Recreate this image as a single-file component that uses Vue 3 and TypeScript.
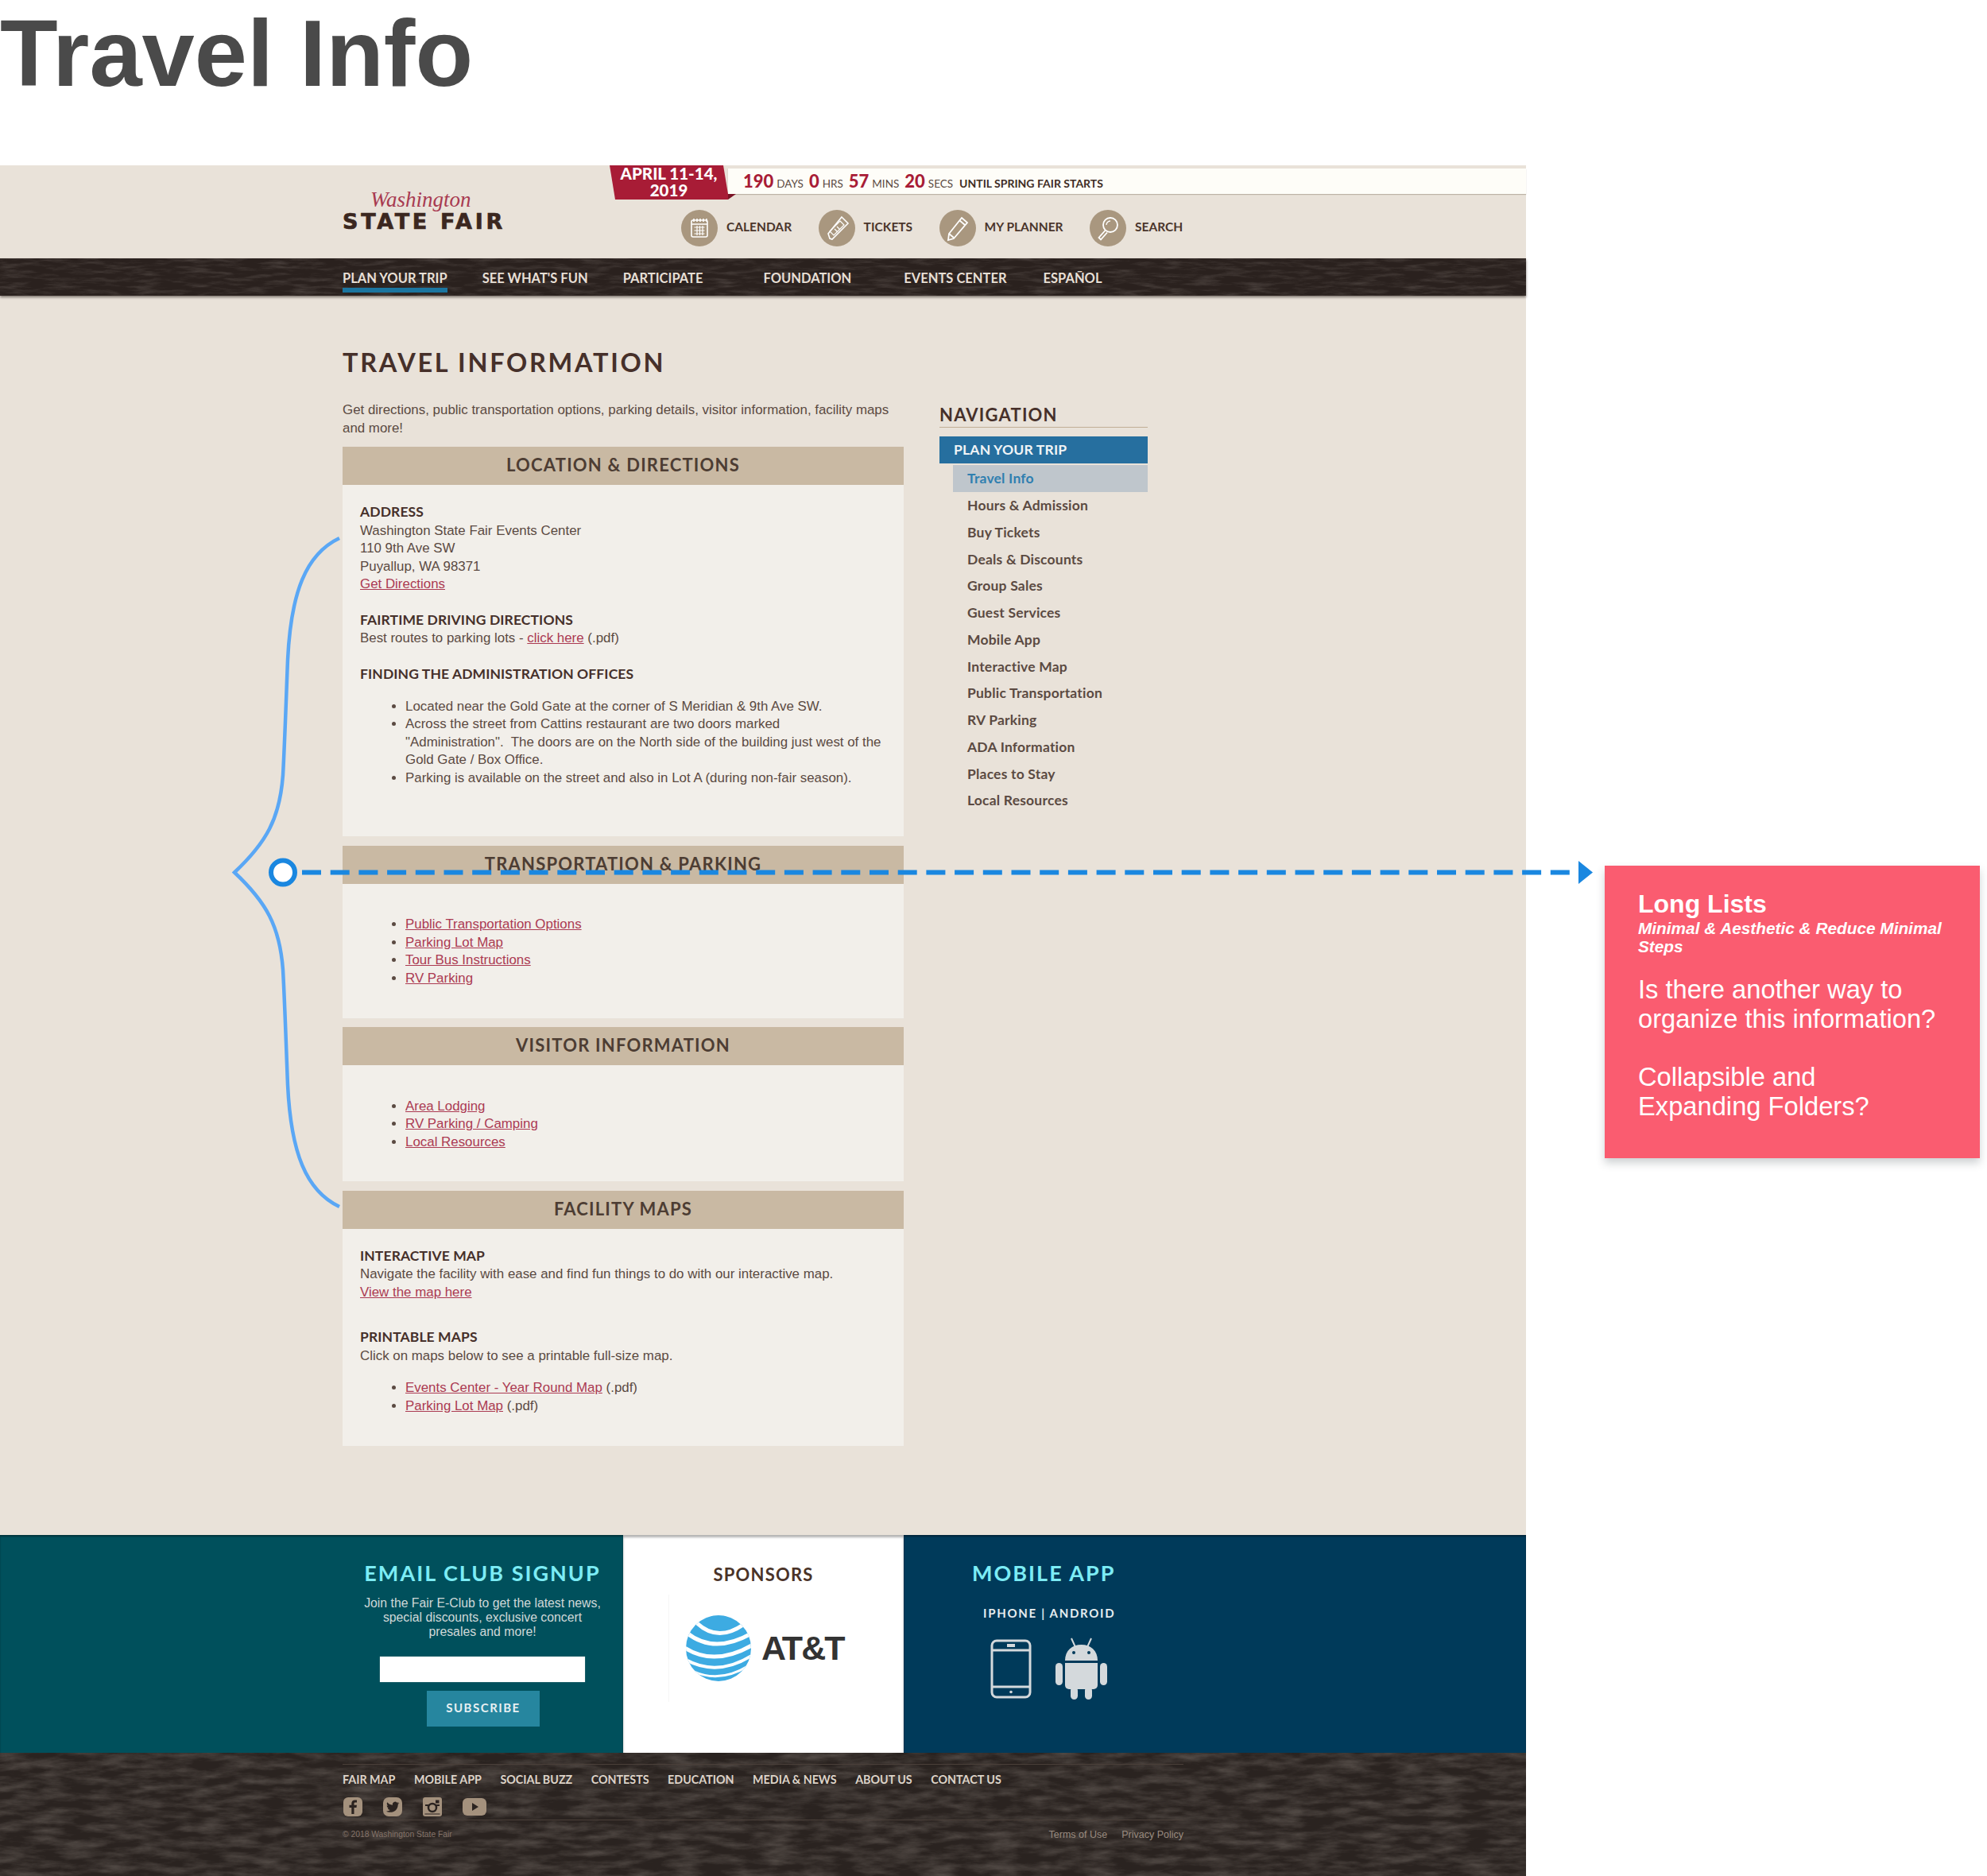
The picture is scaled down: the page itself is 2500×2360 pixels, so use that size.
<script setup lang="ts">
const tools = ['CALENDAR', 'TICKETS', 'MY PLANNER', 'SEARCH']
const navItems = ['PLAN YOUR TRIP', "SEE WHAT'S FUN", 'PARTICIPATE', 'FOUNDATION', 'EVENTS CENTER', 'ESPAÑOL']
const sideItems = [
  'Hours & Admission', 'Buy Tickets', 'Deals & Discounts', 'Group Sales', 'Guest Services', 'Mobile App',
  'Interactive Map', 'Public Transportation', 'RV Parking', 'ADA Information', 'Places to Stay', 'Local Resources'
]
const transportLinks = ['Public Transportation Options', 'Parking Lot Map', 'Tour Bus Instructions', 'RV Parking']
const visitorLinks = ['Area Lodging', 'RV Parking / Camping', 'Local Resources']
const footerLinks = ['FAIR MAP', 'MOBILE APP', 'SOCIAL BUZZ', 'CONTESTS', 'EDUCATION', 'MEDIA & NEWS', 'ABOUT US', 'CONTACT US']
</script>

<template>
  <div class="page">
    <h1 class="page-title">Travel Info</h1>

    <div class="site">
      <header class="head">
        <div class="logo">
          <span class="logo-script">Washington</span>
          <span class="logo-main">STATE FAIR</span>
        </div>
        <div class="head-right">
          <div class="count-row">
            <div class="ribbon">APRIL 11-14,<br />2019</div>
            <div class="ribbon-fold"></div>
            <div class="countdown">
              <b>190</b><span>DAYS</span><b>0</b><span>HRS</span><b>57</b><span>MINS</span><b>20</b><span>SECS</span>
              <em>UNTIL SPRING FAIR STARTS</em>
            </div>
          </div>
          <div class="tools">
            <div v-for="(tool, i) in tools" :key="tool" class="tool">
              <span class="tool-icon">
                <svg v-if="i === 0" viewBox="0 0 46 46" width="46" height="46" fill="none" stroke="#fff" stroke-width="1.6">
                  <rect x="13" y="13" width="20" height="21" rx="2" />
                  <path d="M13 18h20M16 11v4M20 11v4M24 11v4M28 11v4M32 11v4" />
                  <path d="M16.500 22h13M16.500 26h13M16.500 30h13M20 20v12M23.500 20v12M27 20v12" stroke-width="1.200" />
                </svg>
                <svg v-else-if="i === 1" viewBox="0 0 46 46" width="46" height="46" fill="none" stroke="#fff" stroke-width="1.6">
                  <path d="M29 9l8 8-3 3-17 17-3-1-1-3-1-3z" />
                  <path d="M27 14l5 5-13 13-5-5z" stroke-width="1.200" />
                  <path d="M20 24l4 4M23 21l4 4" stroke-width="1.200" />
                </svg>
                <svg v-else-if="i === 2" viewBox="0 0 46 46" width="46" height="46" fill="none" stroke="#fff" stroke-width="1.8">
                  <path d="M28 10l7 6-17 20-7 2 1-8z" />
                  <path d="M25 13l7 6M12 30l6 5" />
                </svg>
                <svg v-else viewBox="0 0 46 46" width="46" height="46" fill="none" stroke="#fff" stroke-width="1.8">
                  <circle cx="26" cy="19" r="9" />
                  <path d="M26 14a5 5 0 0 0-5 5" stroke-width="1.300" />
                  <path d="M19.500 26l-8 9 2.500 2.500 8-9" />
                </svg>
              </span>
              <span class="tool-label">{{ tool }}</span>
            </div>
          </div>
        </div>
      </header>

      <nav class="mainnav">
        <svg class="wood" width="100%" height="100%">
          <filter id="grainNav" x="0" y="0" width="100%" height="100%">
            <feTurbulence type="fractalNoise" baseFrequency="0.03 0.2" numOctaves="5" seed="7" />
            <feColorMatrix values="0 0 0 0 0.40  0 0 0 0 0.35  0 0 0 0 0.32  0.500 0 0 0 -0.220" />
          </filter>
          <rect width="100%" height="100%" filter="url(#grainNav)" />
        </svg>
        <a v-for="(item, i) in navItems" :key="item" class="nav-link" :class="{ current: i === 0 }">{{ item }}</a>
      </nav>

      <main class="main">
        <div class="content">
          <h2 class="main-title">TRAVEL INFORMATION</h2>
          <p class="intro">Get directions, public transportation options, parking details, visitor information, facility maps and more!</p>

          <section class="card">
            <h3 class="card-head">LOCATION &amp; DIRECTIONS</h3>
            <div class="card-body location">
              <h4>ADDRESS</h4>
              <p>Washington State Fair Events Center<br />110 9th Ave SW<br />Puyallup, WA 98371<br /><a>Get Directions</a></p>
              <h4 class="spaced">FAIRTIME DRIVING DIRECTIONS</h4>
              <p>Best routes to parking lots - <a>click here</a> (.pdf)</p>
              <h4 class="spaced">FINDING THE ADMINISTRATION OFFICES</h4>
              <ul class="offices">
                <li>Located near the Gold Gate at the corner of S Meridian &amp; 9th Ave SW.</li>
                <li>Across the street from Cattins restaurant are two doors marked<br />"Administration".&nbsp; The doors are on the North side of the building just west of the<br />Gold Gate / Box Office.</li>
                <li>Parking is available on the street and also in Lot A (during non-fair season).</li>
              </ul>
            </div>
          </section>

          <section class="card">
            <h3 class="card-head">TRANSPORTATION &amp; PARKING</h3>
            <div class="card-body links">
              <ul>
                <li v-for="link in transportLinks" :key="link"><a>{{ link }}</a></li>
              </ul>
            </div>
          </section>

          <section class="card">
            <h3 class="card-head">VISITOR INFORMATION</h3>
            <div class="card-body links short">
              <ul>
                <li v-for="link in visitorLinks" :key="link"><a>{{ link }}</a></li>
              </ul>
            </div>
          </section>

          <section class="card">
            <h3 class="card-head">FACILITY MAPS</h3>
            <div class="card-body maps">
              <h4>INTERACTIVE MAP</h4>
              <p>Navigate the facility with ease and find fun things to do with our interactive map.<br /><a>View the map here</a></p>
              <h4 class="printable">PRINTABLE MAPS</h4>
              <p>Click on maps below to see a printable full-size map.</p>
              <ul class="map-list">
                <li><a>Events Center - Year Round Map</a> (.pdf)</li>
                <li><a>Parking Lot Map</a> (.pdf)</li>
              </ul>
            </div>
          </section>
        </div>

        <aside class="side">
          <h3 class="side-title">NAVIGATION</h3>
          <div class="side-top">PLAN YOUR TRIP</div>
          <div class="side-current">Travel Info</div>
          <a v-for="item in sideItems" :key="item" class="side-link">{{ item }}</a>
        </aside>
      </main>

      <div class="bands">
        <div class="band band-email">
          <h3 class="band-title">EMAIL CLUB SIGNUP</h3>
          <p class="band-copy">Join the Fair E-Club to get the latest news,<br />special discounts, exclusive concert<br />presales and more!</p>
          <input class="email" type="text" />
          <button class="subscribe" type="button">SUBSCRIBE</button>
        </div>
        <div class="band band-sponsor">
          <h3 class="sponsor-title">SPONSORS</h3>
          <div class="sponsor-logo">
            <svg viewBox="0 0 82 83" width="82" height="83">
              <clipPath id="globeClip"><ellipse cx="41" cy="41.500" rx="41" ry="41.500" /></clipPath>
              <g clip-path="url(#globeClip)">
                <rect width="82" height="83" fill="#3dabe2" />
                <g fill="none" stroke="#fff">
                  <path d="M14 10Q40 34 72 12" stroke-width="5" />
                  <path d="M1 22Q36 50 84 22" stroke-width="5" />
                  <path d="M-3 40Q36 66 86 36" stroke-width="5" />
                  <path d="M0 56Q40 78 84 50" stroke-width="4" />
                  <path d="M8 70Q42 86 78 64" stroke-width="3" />
                </g>
              </g>
            </svg>
            <span class="att">AT&amp;T</span>
          </div>
        </div>
        <div class="band band-app">
          <h3 class="band-title app-title">MOBILE APP</h3>
          <div class="app-sub">IPHONE | ANDROID</div>
          <div class="app-icons">
            <svg viewBox="0 0 52 75" width="52" height="75" fill="none" stroke="#d4d9dc" stroke-width="3">
              <rect x="2" y="2" width="48" height="71" rx="6" />
              <path d="M2 14h48M2 60h48" />
              <path d="M21 8h10" stroke-width="4" />
              <circle cx="26" cy="66.500" r="1.800" fill="#d4d9dc" stroke="none" />
            </svg>
            <svg viewBox="0 0 67 78" width="67" height="78" fill="#d4d9dc">
              <path d="M21 1l5 11M46 1l-5 11" stroke="#d4d9dc" stroke-width="2" fill="none" />
              <path d="M13 29C13 16 22 9 33.500 9S54 16 54 29z" />
              <circle cx="24" cy="19" r="2" fill="#003a5a" />
              <circle cx="43" cy="19" r="2" fill="#003a5a" />
              <path d="M13 32h41v28a5 5 0 0 1-5 5H18a5 5 0 0 1-5-5z" />
              <rect x="1" y="32" width="9" height="28" rx="4.500" />
              <rect x="57" y="32" width="9" height="28" rx="4.500" />
              <rect x="20" y="62" width="9" height="16" rx="4.500" />
              <rect x="38" y="62" width="9" height="16" rx="4.500" />
            </svg>
          </div>
        </div>
      </div>

      <footer class="foot">
        <svg class="wood" width="100%" height="100%">
          <filter id="grainFoot" x="0" y="0" width="100%" height="100%">
            <feTurbulence type="fractalNoise" baseFrequency="0.025 0.1" numOctaves="5" seed="11" />
            <feColorMatrix values="0 0 0 0 0.42  0 0 0 0 0.37  0 0 0 0 0.33  0.550 0 0 0 -0.190" />
          </filter>
          <rect width="100%" height="100%" filter="url(#grainFoot)" />
        </svg>
        <div class="foot-inner">
          <div class="foot-links">
            <a v-for="link in footerLinks" :key="link">{{ link }}</a>
          </div>
          <div class="social">
            <svg viewBox="0 0 24 24" width="24" height="24">
              <rect y="0" width="24" height="24" rx="6" fill="#a4917d" />
              <path d="M13.500 21v-8h3l.4-3.200h-3.400V8c0-1 .3-1.600 1.600-1.600H17V3.500c-.4 0-1.400-.1-2.500-.1-2.500 0-4.200 1.500-4.200 4.200v2.200H7.500V13h2.800v8z" fill="#2b2320" />
            </svg>
            <svg viewBox="0 0 24 24" width="24" height="24">
              <rect y="0" width="24" height="24" rx="7" fill="#a4917d" />
              <path d="M20 7.200c-.6.300-1.200.4-1.900.5.700-.4 1.200-1 1.400-1.800-.6.400-1.300.6-2 .8a3.300 3.300 0 0 0-5.600 3C9.200 9.600 6.800 8.300 5.200 6.300c-.9 1.500-.4 3.400 1 4.400-.5 0-1-.2-1.500-.4 0 1.600 1.100 3 2.600 3.300-.5.100-1 .1-1.500.1.400 1.300 1.600 2.200 3.100 2.300a6.600 6.600 0 0 1-4.900 1.400c5.600 3.500 14.600.7 14.800-8.700.7-.5 1.300-1.100 1.700-1.800z" fill="#2b2320" />
            </svg>
            <svg viewBox="0 0 24 24" width="24" height="24">
              <rect y="0" width="24" height="24" rx="3" fill="#a4917d" />
              <path d="M3 10h18" stroke="#2b2320" stroke-width="2" />
              <circle cx="12" cy="13" r="5" fill="#a4917d" stroke="#2b2320" stroke-width="2.500" />
              <rect x="16" y="3.500" width="4.500" height="4" fill="#2b2320" />
              <rect x="2.500" y="20.500" width="19" height="1" fill="#2b2320" />
            </svg>
            <svg viewBox="0 0 30 24" width="30" height="24">
              <rect y="1" width="30" height="22" rx="6" fill="#a4917d" />
              <path d="M12 7l8 5-8 5z" fill="#2b2320" />
            </svg>
          </div>
          <div class="foot-bottom">
            <span class="copy">© 2018 Washington State Fair</span>
            <span class="legal"><a>Terms of Use</a><a>Privacy Policy</a></span>
          </div>
        </div>
      </footer>
    </div>

    <!-- annotation layer over the screenshot -->
    <svg class="overlay" viewBox="0 0 2500 2360" width="2500" height="2360" fill="none">
      <path d="M427 677C385 697 366 745 362 830C360 880 358 940 356 975C352 1030 335 1060 295 1097.500C335 1135 352 1165 356 1220C358 1255 360 1315 362 1365C366 1450 385 1498 427 1518" stroke="#5aa7f5" stroke-width="4.500" />
      <path d="M380 1097.500H1976" stroke="#1a87e0" stroke-width="6" stroke-dasharray="24 11.700" />
      <circle cx="356" cy="1097.500" r="15" fill="#fff" stroke="#1a87e0" stroke-width="6" />
      <path d="M1986 1083L2004 1097.500L1986 1112z" fill="#1a87e0" />
    </svg>

    <aside class="note">
      <h3 class="note-title">Long Lists</h3>
      <p class="note-sub">Minimal &amp; Aesthetic &amp; Reduce Minimal Steps</p>
      <p class="note-text">Is there another way to<br />organize this information?</p>
      <p class="note-text gap">Collapsible and<br />Expanding Folders?</p>
    </aside>
  </div>
</template>

<style scoped>
.page {
  position: relative;
  width: 2500px;
  height: 2360px;
  overflow: hidden;
  background: #fff;
  font-family: "Liberation Sans", Arial, sans-serif;
}

.page-title {
  margin: 0;
  height: 208px;
  font-size: 119px;
  line-height: 134px;
  font-weight: 700;
  color: #4a4a4a;
}

.site {
  width: 1920px;
  background: #e9e2d9;
  color: #5b4a42;
}

.head {
  display: flex;
  height: 117px;
  padding-left: 431px;
  box-sizing: border-box;
}

.logo {
  width: 336px;
  display: flex;
  flex-direction: column;
  padding-top: 29px;
}

.logo-script {
  margin-left: 35px;
  font-family: "Liberation Serif", serif;
  font-style: italic;
  font-size: 27px;
  line-height: 29px;
  color: #a83a50;
}

.logo-main {
  font-family: "DejaVu Sans", sans-serif;
  font-weight: 700;
  font-size: 27px;
  line-height: 26px;
  letter-spacing: 3.700px;
  -webkit-text-stroke: .7px #3b2720;
  color: #3b2720;
}

.head-right {
  flex: 1;
}

.count-row {
  display: flex;
  position: relative;
  height: 43px;
}

.ribbon {
  width: 149px;
  height: 43px;
  background: #a81c36;
  clip-path: polygon(0 0, 143px 0, 149px 36px, 149px 43px, 7px 43px);
  color: #fff;
  font-family: Lato, sans-serif;
  font-weight: 900;
  font-size: 20.500px;
  line-height: 21px;
  text-align: center;
}

.ribbon-fold {
  position: absolute;
  left: 149px;
  top: 36px;
  width: 0;
  height: 0;
  border-top: 7px solid #7a1426;
  border-right: 10px solid transparent;
}

.countdown {
  flex: 1;
  height: 32px;
  margin-top: 4px;
  padding-left: 19px;
  display: flex;
  align-items: baseline;
  background: #fefdf8;
  box-shadow: 0 1px 1px rgba(90, 70, 50, .3);
  font-family: Lato, sans-serif;
  line-height: 32px;
}

.countdown b {
  margin-right: 4px;
  font-size: 22px;
  font-weight: 900;
  color: #a81c36;
}

.countdown span {
  margin-right: 7px;
  font-size: 13.500px;
  color: #5b4a42;
}

.countdown em {
  margin-left: 1px;
  font-style: normal;
  font-weight: 700;
  font-size: 14px;
  color: #3f2d25;
}

.tools {
  display: flex;
  gap: 33.500px;
  margin: 13px 0 0 90px;
}

.tool {
  display: flex;
  align-items: center;
  gap: 11px;
}

.tool-icon {
  display: block;
  width: 46px;
  height: 46px;
  border-radius: 50%;
  background: #a9977f;
}

.tool-label {
  margin-top: -4px;
  font-family: Lato, sans-serif;
  font-weight: 700;
  font-size: 15.500px;
  color: #4a352b;
}

.mainnav {
  position: relative;
  display: flex;
  gap: 44px;
  height: 47px;
  padding-left: 431px;
  box-sizing: border-box;
  background: #2a211e;
  box-shadow: 0 2px 3px rgba(40, 30, 25, .55);
}

.wood {
  position: absolute;
  left: 0;
  top: 0;
}

.nav-link {
  position: relative;
  height: 37px;
  font-family: Lato, sans-serif;
  font-weight: 700;
  font-size: 16.500px;
  line-height: 50px;
  color: #e7dfd5;
}

.nav-link.current {
  border-bottom: 6px solid #1b75a0;
}

.nav-link:nth-of-type(3) {
  margin-right: 32px;
}

.nav-link:nth-of-type(4) {
  margin-right: 22px;
}

.nav-link:nth-of-type(5) {
  margin-right: 2px;
}

.main {
  display: flex;
  gap: 45px;
  height: 1559px;
  padding-left: 431px;
  box-sizing: border-box;
}

.content {
  width: 706px;
}

.main-title {
  margin: 0;
  padding-top: 64px;
  font-family: Lato, sans-serif;
  font-weight: 700;
  font-size: 32.500px;
  line-height: 40px;
  letter-spacing: 2.700px;
  color: #46302a;
}

.intro {
  margin: 29px 0 0;
  font-size: 16.900px;
  line-height: 22.500px;
}

.card {
  margin-top: 11.500px;
}

.intro + .card {
  margin-top: 12px;
}

.card-head {
  margin: 0;
  height: 48px;
  background: #c9b9a3;
  font-family: Lato, sans-serif;
  font-weight: 700;
  font-size: 22px;
  line-height: 46px;
  letter-spacing: 1.200px;
  text-align: center;
  color: #4d3d33;
}

.card-body {
  background: #f2efea;
  font-size: 16.900px;
  line-height: 22.500px;
  padding: 0 22px;
  box-sizing: border-box;
}

.card-body h4 {
  margin: 0;
  font-family: Lato, sans-serif;
  font-weight: 700;
  font-size: 17.500px;
  line-height: 24.500px;
  letter-spacing: .1px;
  color: #46302a;
}

.card-body h4.spaced {
  margin-top: 21px;
}

.card-body p {
  margin: 0;
}

.card-body ul {
  margin: 0;
  padding-left: 57px;
}

.card-body a {
  color: #ab3a52;
  text-decoration: underline;
}

.location {
  height: 442px;
  padding-top: 22px;
}

.offices {
  margin-top: 17.500px !important;
}

.links {
  padding-top: 40.500px;
  height: 169px;
}

.links.short {
  height: 146px;
}

.maps {
  height: 273px;
  padding-top: 22px;
}

.printable {
  margin-top: 33px !important;
}

.map-list {
  margin-top: 18px !important;
}

.side {
  width: 262px;
  padding-top: 135px;
}

.side-title {
  margin: 0;
  border-bottom: 1px solid #c1ae96;
  font-family: Lato, sans-serif;
  font-weight: 700;
  font-size: 22px;
  line-height: 30px;
  letter-spacing: 1.200px;
  color: #46302a;
}

.side-top {
  margin-top: 11px;
  height: 34px;
  padding-left: 18px;
  background: #266f9f;
  font-family: Lato, sans-serif;
  font-weight: 700;
  font-size: 17.500px;
  line-height: 34px;
  letter-spacing: .2px;
  color: #f0f4f6;
}

.side-current {
  margin: 2px 0 0 17px;
  height: 34px;
  padding-left: 18px;
  background: #bfc6cc;
  font-family: Lato, sans-serif;
  font-weight: 700;
  font-size: 17.500px;
  line-height: 34px;
  letter-spacing: .2px;
  color: #2f7fb0;
}

.side-link {
  display: block;
  height: 33.750px;
  padding-left: 35px;
  font-family: Lato, sans-serif;
  font-weight: 700;
  font-size: 17.500px;
  line-height: 33.750px;
  letter-spacing: .2px;
  color: #5b4a42;
}

.bands {
  display: flex;
  height: 274px;
}

.band {
  box-sizing: border-box;
  text-align: center;
}

.band-email {
  width: 784px;
  padding-left: 431px;
  background: #00505c;
  box-shadow: inset 0 2px 2px rgba(0, 0, 0, .35);
}

.band-sponsor {
  width: 353px;
  background: #fff;
  box-shadow: inset 0 3px 3px rgba(0, 0, 0, .3);
}

.band-app {
  width: 783px;
  padding-left: 86px;
  background: #003a5a;
  text-align: left;
  box-shadow: inset 0 2px 2px rgba(0, 0, 0, .35);
}

.band-title {
  margin: 32px 0 0;
  width: 352px;
  font-family: Lato, sans-serif;
  font-weight: 700;
  font-size: 27px;
  line-height: 32px;
  letter-spacing: 2px;
  color: #7cecf5;
}

.app-title {
  width: auto;
}

.band-copy {
  margin: 13px 0 0;
  width: 352px;
  font-size: 15.800px;
  line-height: 18px;
  color: #d0d8d8;
}

.email {
  display: block;
  width: 258px;
  height: 32px;
  margin: 22px 0 0 47px;
  padding: 0;
  border: 0;
  background: #fff;
  box-shadow: 0 0 1px rgba(200, 200, 190, .8);
}

.subscribe {
  display: block;
  width: 142px;
  height: 45px;
  margin: 11px 0 0 106px;
  padding: 0 0 3px;
  border: 0;
  background: #26869f;
  font-family: Lato, sans-serif;
  font-weight: 700;
  font-size: 15px;
  letter-spacing: 1.500px;
  color: #e8f0f2;
}

.sponsor-title {
  margin: 36px 0 0;
  font-family: Lato, sans-serif;
  font-weight: 700;
  font-size: 22px;
  line-height: 28px;
  letter-spacing: 1.200px;
  color: #4a3328;
}

.sponsor-logo {
  display: flex;
  align-items: center;
  gap: 13px;
  height: 135px;
  margin: 11px 0 0 57px;
  padding-left: 21px;
  border-left: 1px solid #f6f6f6;
}

.att {
  font-family: "Liberation Sans", sans-serif;
  font-weight: 700;
  font-size: 43px;
  letter-spacing: -2px;
  color: #333;
}

.app-sub {
  margin: 24px 0 0 14px;
  font-family: Lato, sans-serif;
  font-weight: 700;
  font-size: 15px;
  line-height: 20px;
  letter-spacing: 1.700px;
  color: #e6ecef;
}

.app-icons {
  display: flex;
  align-items: center;
  gap: 29px;
  margin: 21px 0 0 23px;
}

.foot {
  position: relative;
  height: 155px;
  padding-left: 431px;
  box-sizing: border-box;
  background: #2a2320;
  overflow: hidden;
}

.foot-inner {
  position: relative;
  width: 1058px;
  padding-top: 14px;
}

.foot-links {
  display: flex;
  gap: 23.500px;
  padding-top: 9px;
  border-top: 1px solid #4a3f39;
  font-family: Lato, sans-serif;
  font-weight: 700;
  font-size: 14.300px;
  line-height: 20px;
  color: #ddd3c8;
}

.social {
  display: flex;
  gap: 26px;
  margin-top: 12px;
  padding: 0 1px 4px;
  border-bottom: 1px solid #4a3f39;
}

.foot-bottom {
  display: flex;
  justify-content: space-between;
  margin-top: 9px;
  line-height: 18px;
}

.copy {
  font-size: 10.300px;
  color: #85746a;
}

.legal {
  display: flex;
  gap: 18px;
  font-size: 12.500px;
  color: #9a8c80;
}

.overlay {
  position: absolute;
  left: 0;
  top: 0;
  pointer-events: none;
}

.note {
  position: absolute;
  left: 2019px;
  top: 1089px;
  width: 472px;
  height: 368px;
  padding: 29px 30px 0 42px;
  box-sizing: border-box;
  background: #fa5c70;
  box-shadow: 0 6px 10px rgba(60, 70, 80, .25);
  color: #fff;
}

.note-title {
  margin: 0;
  font-size: 32px;
  line-height: 38px;
  font-weight: 700;
}

.note-sub {
  margin: 0;
  font-size: 20.800px;
  line-height: 23px;
  font-weight: 700;
  font-style: italic;
}

.note-text {
  margin: 24px 0 0;
  font-size: 32.700px;
  line-height: 37px;
}

.note-text.gap {
  margin-top: 36px;
}
</style>

<style>
html,
body {
  margin: 0;
  background: #fff;
}
</style>
